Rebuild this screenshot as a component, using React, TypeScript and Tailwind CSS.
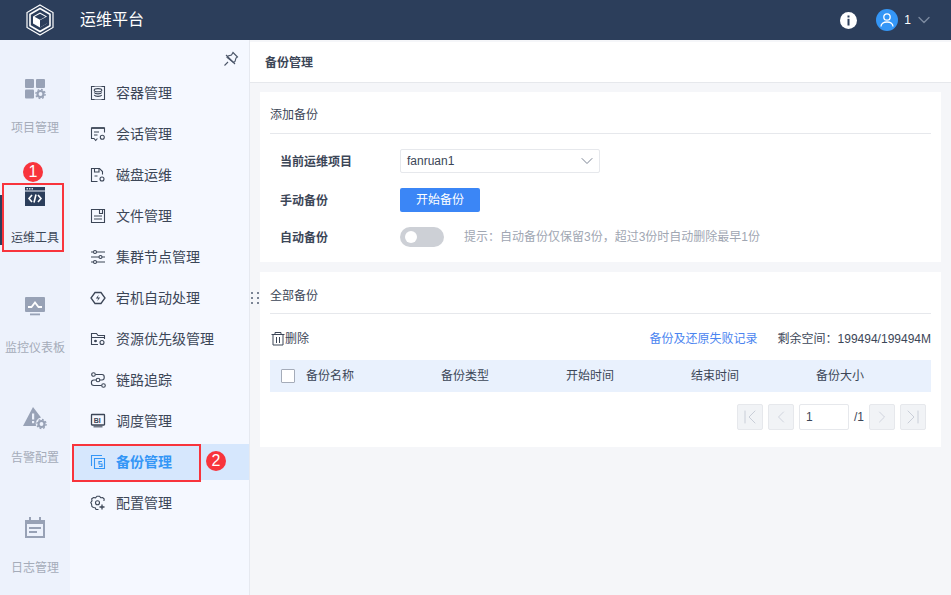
import { ChevronDown, ChevronLeft, ChevronRight, ChevronFirst, ChevronLast } from 'lucide-react';

const FONT = 'font-["Liberation_Sans","Noto_Sans_CJK_SC",sans-serif]';

function RailIcon({ name }: { name: string }) {
  const fill = name === 'tools' ? '#2c3e5b' : '#98a2b6';
  return (
    <svg width="24" height="24" viewBox="0 0 24 24" fill={fill}>
      {name === 'project' && (
        <>
          <rect x="2" y="3" width="9" height="9" rx="1" />
          <rect x="13" y="3" width="9" height="9" rx="1" />
          <rect x="2" y="13.5" width="9" height="9" rx="1" />
          <circle cx="17.5" cy="18" r="3" fill="none" stroke={fill} strokeWidth="2.2" />
          <circle cx="17.5" cy="18" r="4.6" fill="none" stroke={fill} strokeWidth="1.4" strokeDasharray="1.8 1.8" />
        </>
      )}
      {name === 'tools' && (
        <>
          <path d="M2 1h20v19H2z" />
          <rect x="2" y="4.5" width="20" height="1" fill="#edf2fc" />
          <rect x="3.5" y="2.2" width="1.5" height="1.2" fill="#fff" />
          <rect x="6" y="2.2" width="1.5" height="1.2" fill="#fff" />
          <rect x="8.5" y="2.2" width="1.5" height="1.2" fill="#fff" />
          <path d="M9 9l-3 3.5 3 3.5M15 9l3 3.5-3 3.5M13 8.5l-2 8" fill="none" stroke="#fff" strokeWidth="1.6" />
        </>
      )}
      {name === 'monitor' && (
        <>
          <path d="M3 1h18a1 1 0 0 1 1 1v13a1 1 0 0 1-1 1H3a1 1 0 0 1-1-1V2a1 1 0 0 1 1-1z" />
          <path d="M5 11h3.5l3.5-4.5 3.5 4.5h3.5" fill="none" stroke="#fff" strokeWidth="1.8" />
          <rect x="7" y="17.5" width="10" height="1.8" />
        </>
      )}
      {name === 'alarm' && (
        <>
          <path d="M10 1L0 20h13a6.5 6.5 0 0 1 5-8.5z" />
          <rect x="9" y="7.5" width="2.2" height="6" fill="#edf2fc" />
          <rect x="9" y="15" width="2.2" height="2.2" fill="#edf2fc" />
          <circle cx="18.5" cy="18" r="3" fill="none" stroke={fill} strokeWidth="2.2" />
          <circle cx="18.5" cy="18" r="4.6" fill="none" stroke={fill} strokeWidth="1.3" strokeDasharray="1.8 1.8" />
        </>
      )}
      {name === 'log' && (
        <>
          <path d="M6 1h2v3h8V1h2v3h4v18H2V4h4z" />
          <rect x="4" y="8" width="16" height="12" fill="#edf2fc" />
          <rect x="6" y="11" width="12" height="2" />
          <rect x="6" y="15" width="8" height="2" />
        </>
      )}
    </svg>
  );
}

function MenuIcon({ name, color }: { name: string; color: string }) {
  return (
    <svg width="16" height="16" viewBox="0 0 16 16" fill="none" stroke={color} strokeWidth="1.1">
      {name === 'container' && (
        <>
          <path d="M4.5 1.5h-3v13h3M11.5 1.5h3v13h-3" />
          <path d="M1.5 1.5h13M1.5 14.5h13" strokeOpacity="0.6" />
          <ellipse cx="8" cy="5.2" rx="3.8" ry="1.6" />
          <path d="M4.2 7.5c1 1.8 6.6 1.8 7.6 0M4.2 10c1 1.8 6.6 1.8 7.6 0" />
        </>
      )}
      {name === 'session' && (
        <>
          <path d="M14.5 6.5V2H1.5v10.5H4l1.7 2 1.7-2" />
          <path d="M1.5 2h13" strokeWidth="1.6" />
          <path d="M4 6h5M4 9h3.5" />
          <circle cx="12.3" cy="11.3" r="2" />
        </>
      )}
      {name === 'disk' && (
        <>
          <path d="M7.5 14.5H1.5v-13h8l3 3v3" />
          <path d="M4.5 1.5V5H9V1.5M4.5 9h3" />
          <circle cx="12" cy="12" r="2" />
        </>
      )}
      {name === 'file' && (
        <>
          <path d="M1.5 1.5h13v13h-13z" />
          <path d="M9.5 1.5v4h3v-4M4 8h8M4 11h8" />
        </>
      )}
      {name === 'cluster' && (
        <>
          <path d="M1 3h2.5M6.5 3H15M1 8h8M12 8h3M1 13h2.5M6.5 13H15" />
          <circle cx="5" cy="3" r="1.5" />
          <circle cx="10.5" cy="8" r="1.5" />
          <circle cx="5" cy="13" r="1.5" />
        </>
      )}
      {name === 'host' && (
        <>
          <path d="M5 2.5h6L15 8l-4 5.5H5L1 8z" strokeWidth="1.3" />
          <path d="M8.8 4.8L5.8 8.6h2.4L7.2 11.2l3-3.8H7.8z" fill={color} stroke="none" />
        </>
      )}
      {name === 'priority' && (
        <>
          <path d="M8 13.5H1.5v-11h5L8 4.5h6.5V8" />
          <path d="M1.5 6.5h13M4 10h3" />
          <circle cx="5.5" cy="10" r="1.2" fill={color} stroke="none" />
          <circle cx="12" cy="11.5" r="2" />
        </>
      )}
      {name === 'trace' && (
        <>
          <circle cx="3.5" cy="2.5" r="1.8" />
          <circle cx="8" cy="8" r="1.8" />
          <circle cx="13.5" cy="13.5" r="1.8" />
          <path d="M5.5 2.5H12c3 0 3 5.5 0 5.5h-2M6 8H4c-3.5 0-3.5 5.5 0 5.5h7.5" />
        </>
      )}
      {name === 'schedule' && (
        <>
          <rect x="1.5" y="1.5" width="13" height="10.5" rx="0.5" strokeWidth="1.3" />
          <path d="M3.5 13.5h9" strokeWidth="2" strokeOpacity="0.7" />
          <text x="3.7" y="9.6" fontSize="7" fontWeight="700" fill={color} stroke="none" fontFamily="Liberation Sans">BI</text>
        </>
      )}
      {name === 'backup' && (
        <>
          <path d="M1.5 12V1.5H12" />
          <path d="M4.5 14.5v-10h10v10z" />
          <path d="M12 7.5H9V10h3v2.5H9" strokeWidth="1.2" />
        </>
      )}
      {name === 'config' && (
        <>
          <path d="M8.5 14.5H6l-.8-1.8-1.900-.2-1.400-1-.4-2.500L.8 7.500 2 5.800l-.3-2L3.500 2.500l2 .3L7 1.200h2.500l1.200 1.500 2-.2 1.500 1.500-.3 2" />
          <circle cx="7.5" cy="7.8" r="2" />
          <path d="M12 9.5v5M9.5 12h5" strokeWidth="1.3" />
        </>
      )}
    </svg>
  );
}

const railItems = [
  { icon: 'project', label: '项目管理' },
  { icon: 'tools', label: '运维工具', active: true },
  { icon: 'monitor', label: '监控仪表板' },
  { icon: 'alarm', label: '告警配置' },
  { icon: 'log', label: '日志管理' },
];

const menuItems = [
  { icon: 'container', label: '容器管理' },
  { icon: 'session', label: '会话管理' },
  { icon: 'disk', label: '磁盘运维' },
  { icon: 'file', label: '文件管理' },
  { icon: 'cluster', label: '集群节点管理' },
  { icon: 'host', label: '宕机自动处理' },
  { icon: 'priority', label: '资源优先级管理' },
  { icon: 'trace', label: '链路追踪' },
  { icon: 'schedule', label: '调度管理' },
  { icon: 'backup', label: '备份管理', active: true },
  { icon: 'config', label: '配置管理' },
];

function PageButton({ children }: { children: React.ReactNode }) {
  return (
    <div className="w-[26px] h-[26px] flex items-center justify-center bg-[#f1f3f6] border border-[#e6e8ec] rounded-[2px] text-[#c9ced8]">
      {children}
    </div>
  );
}

export default function App() {
  return (
    <div className={`relative w-[951px] h-[595px] overflow-hidden flex flex-col bg-[#f5f6f9] text-[#3c4657] ${FONT}`}>
      {/* Header */}
      <header className="h-10 shrink-0 bg-[#2c3e5b] flex items-center">
        <div className="w-[80px] flex justify-center">
          <svg width="28" height="32" viewBox="0 0 28 32" fill="none" stroke="#fff">
            <path d="M14 1L27 8.5V23.5L14 31L1 23.5V8.5Z" strokeWidth="1.2" />
            <path d="M14 4.5L24 10.2V21.8L14 27.5L4 21.8V10.2Z" strokeWidth="1.6" />
            <path d="M14 8.5L21 12.5V19.5L14 23.5L7 19.5V12.5Z" fill="#fff" stroke="none" />
            <path d="M14 16.3V23.5L21 19.5V12.5Z" fill="#2c3e5b" stroke="none" />
            <path d="M14 9.8L19.5 12.8L14 15.8L8.5 12.8Z" fill="#2c3e5b" stroke="none" />
          </svg>
        </div>
        <span className="text-base text-white">运维平台</span>
        <div className="ml-auto flex items-center text-white">
          <svg width="17" height="17" viewBox="0 0 17 17" className="mr-[19px]">
            <circle cx="8.5" cy="8.5" r="8.5" fill="#fff" />
            <rect x="7.5" y="3.5" width="2" height="2" fill="#2c3e5b" />
            <rect x="7.5" y="6.8" width="2" height="6.7" fill="#2c3e5b" />
          </svg>
          <svg width="22" height="22" viewBox="0 0 22 22" fill="none" className="mr-[6px]">
            <circle cx="11" cy="11" r="11" fill="#3496f6" />
            <circle cx="11" cy="8" r="3.2" stroke="#fff" strokeWidth="1.3" />
            <path d="M5 17.5c0-6 12-6 12 0" stroke="#fff" strokeWidth="1.3" />
          </svg>
          <span className="text-xs">1</span>
          <ChevronDown className="w-[20px] h-[20px] ml-[3px] mr-[17px] text-[#7c8aa0]" strokeWidth={1.6} />
        </div>
      </header>

      <div className="flex flex-1 min-h-0">
        {/* First level nav */}
        <nav className="w-[70px] shrink-0 bg-[#edf2fc] pt-[36px] flex flex-col">
          {railItems.map((item) => (
            <div key={item.label} className="h-[110px] shrink-0 flex flex-col items-center">
              <RailIcon name={item.icon} />
              <span className={`mt-[18px] text-xs leading-5 whitespace-nowrap ${item.active ? 'text-[#3c4657]' : 'text-[#a5acb9]'}`}>
                {item.label}
              </span>
            </div>
          ))}
        </nav>

        {/* Second level nav */}
        <aside className="w-[180px] shrink-0 bg-[#f5f8ff] border-r border-[#e6e9f0] flex flex-col">
          <div className="h-[35px] flex items-center justify-end pr-[10px] pt-[2px]">
            <svg width="16" height="16" viewBox="0 0 16 16" fill="none" stroke="#4a5568" strokeWidth="1.1">
              <path d="M10 1.5l4.5 4.5-1.5 1-1 3.5-1.5 1L4 6.5l1-1.500 3.500-1z" />
              <path d="M3 4l9 9" />
              <path d="M5 11l-3.500 3.500" />
            </svg>
          </div>
          <div className="flex flex-col gap-[5px]">
            {menuItems.map((item) => (
              <div
                key={item.label}
                className={`h-9 flex items-center ml-[2px] pl-[18px] text-sm ${item.active ? 'bg-[#d6e7fd] text-[#3496f6] font-bold' : ''}`}
              >
                <MenuIcon name={item.icon} color={item.active ? '#3496f6' : '#3c4657'} />
                <span className="ml-[10px]">{item.label}</span>
              </div>
            ))}
          </div>
        </aside>

        {/* Splitter */}
        <div className="w-[10px] shrink-0 flex items-center justify-center pb-[39px]">
          <div className="grid grid-cols-2 gap-x-[4px] gap-y-[3px]">
            {[0, 1, 2, 3, 4, 5].map((i) => (
              <span key={i} className="w-[2px] h-[2px] bg-[#7b8494]" />
            ))}
          </div>
        </div>

        {/* Main */}
        <main className="flex-1 min-w-0 -ml-[10px]">
          <div className="h-[41px] mt-[2px] pt-[1px] bg-white border-b border-[#e6e8ec] flex items-center pl-[15px] text-xs font-bold">
            备份管理
          </div>
          <div className="pl-[10px] pr-[10px] pt-[9px] flex flex-col gap-[10px]">
            <section className="h-[170px] bg-white px-[10px]">
              <div className="h-[42px] pt-[4px] flex items-center text-xs border-b border-[#e6e8ec]">添加备份</div>
              <div className="flex items-center h-6 mt-[15px] text-xs">
                <span className="w-[130px] pl-[10px] pt-[1px] font-bold">当前运维项目</span>
                <div className="w-[200px] h-6 border border-[#e6e8ec] rounded-[2px] flex items-center justify-between pl-[6px] pr-[2px]">
                  <span>fanruan1</span>
                  <ChevronDown className="w-[20px] h-[20px] text-[#7b8494]" strokeWidth={1.2} />
                </div>
              </div>
              <div className="flex items-center h-6 mt-[15px] text-xs">
                <span className="w-[130px] pl-[10px] pt-[2px] font-bold">手动备份</span>
                <div className="w-[80px] h-6 bg-[#3b86f6] rounded-[2px] text-white flex items-center justify-center">开始备份</div>
              </div>
              <div className="flex items-center h-5 mt-[15px] text-xs">
                <span className="w-[130px] pl-[10px] pt-[1px] font-bold">自动备份</span>
                <div className="w-[44px] h-5 rounded-full bg-[#cdd0d6] flex items-center pl-[5px]">
                  <span className="w-[12px] h-[12px] rounded-full bg-white" />
                </div>
                <span className="ml-[20px] text-[#a0a6b2]">提示：自动备份仅保留3份，超过3份时自动删除最早1份</span>
              </div>
            </section>

            <section className="h-[175px] bg-white px-[10px]">
              <div className="h-[42px] pt-[6px] flex items-center text-xs border-b border-[#e6e8ec]">全部备份</div>
              <div className="h-[46px] pt-[4px] flex items-center text-xs">
                <svg width="14" height="14" viewBox="0 0 14 14" fill="none" stroke="#3c4657" className="ml-[1px]">
                  <path d="M0.5 2.5h13M4 2.5V0.5h6v2M2 2.5V13h10V2.5M5.5 5v6M8.5 5v6" />
                </svg>
                <span>删除</span>
                <span className="ml-auto text-[#4a84f0]">备份及还原失败记录</span>
                <span className="ml-[20px]">剩余空间：199494/199494M</span>
              </div>
              <div className="h-8 bg-[#e9f1fd] flex items-center text-xs">
                <span className="w-[14px] h-[14px] ml-[11px] border border-[#a5acb9] rounded-[1px] bg-white" />
                <span className="ml-[11px] w-[135px]">备份名称</span>
                <span className="w-[125px]">备份类型</span>
                <span className="w-[125px]">开始时间</span>
                <span className="w-[125px]">结束时间</span>
                <span>备份大小</span>
              </div>
              <div className="flex items-center justify-end gap-[5px] mt-[12px] pr-[5px] text-xs">
                <PageButton><ChevronFirst className="w-[24px] h-[24px] shrink-0" strokeWidth={1} /></PageButton>
                <PageButton><ChevronLeft className="w-[20px] h-[20px]" strokeWidth={1} /></PageButton>
                <div className="w-[50px] h-[26px] border border-[#e6e8ec] rounded-[2px] flex items-center pl-[6px]">1</div>
                <span className="w-[10px] text-right">/1</span>
                <PageButton><ChevronRight className="w-[20px] h-[20px]" strokeWidth={1} /></PageButton>
                <PageButton><ChevronLast className="w-[24px] h-[24px] shrink-0" strokeWidth={1} /></PageButton>
              </div>
            </section>
          </div>
        </main>
      </div>

      {/* Annotation marks */}
      <div className="absolute left-0 top-[195px] w-[2px] h-[50px] bg-[#2c3e5b]" />
      <div className="absolute left-[2px] top-[183px] w-[62px] h-[69px] border-2 border-[#f8343c]" />
      <div className="absolute left-[23px] top-[162px] w-5 h-5 rounded-full bg-[#f8343c] text-white text-base flex items-center justify-center">1</div>
      <div className="absolute left-[72px] top-[444px] w-[129px] h-[38px] border-2 border-[#f8343c]" />
      <div className="absolute left-[206px] top-[451px] w-5 h-5 rounded-full bg-[#f8343c] text-white text-base flex items-center justify-center">2</div>
    </div>
  );
}
